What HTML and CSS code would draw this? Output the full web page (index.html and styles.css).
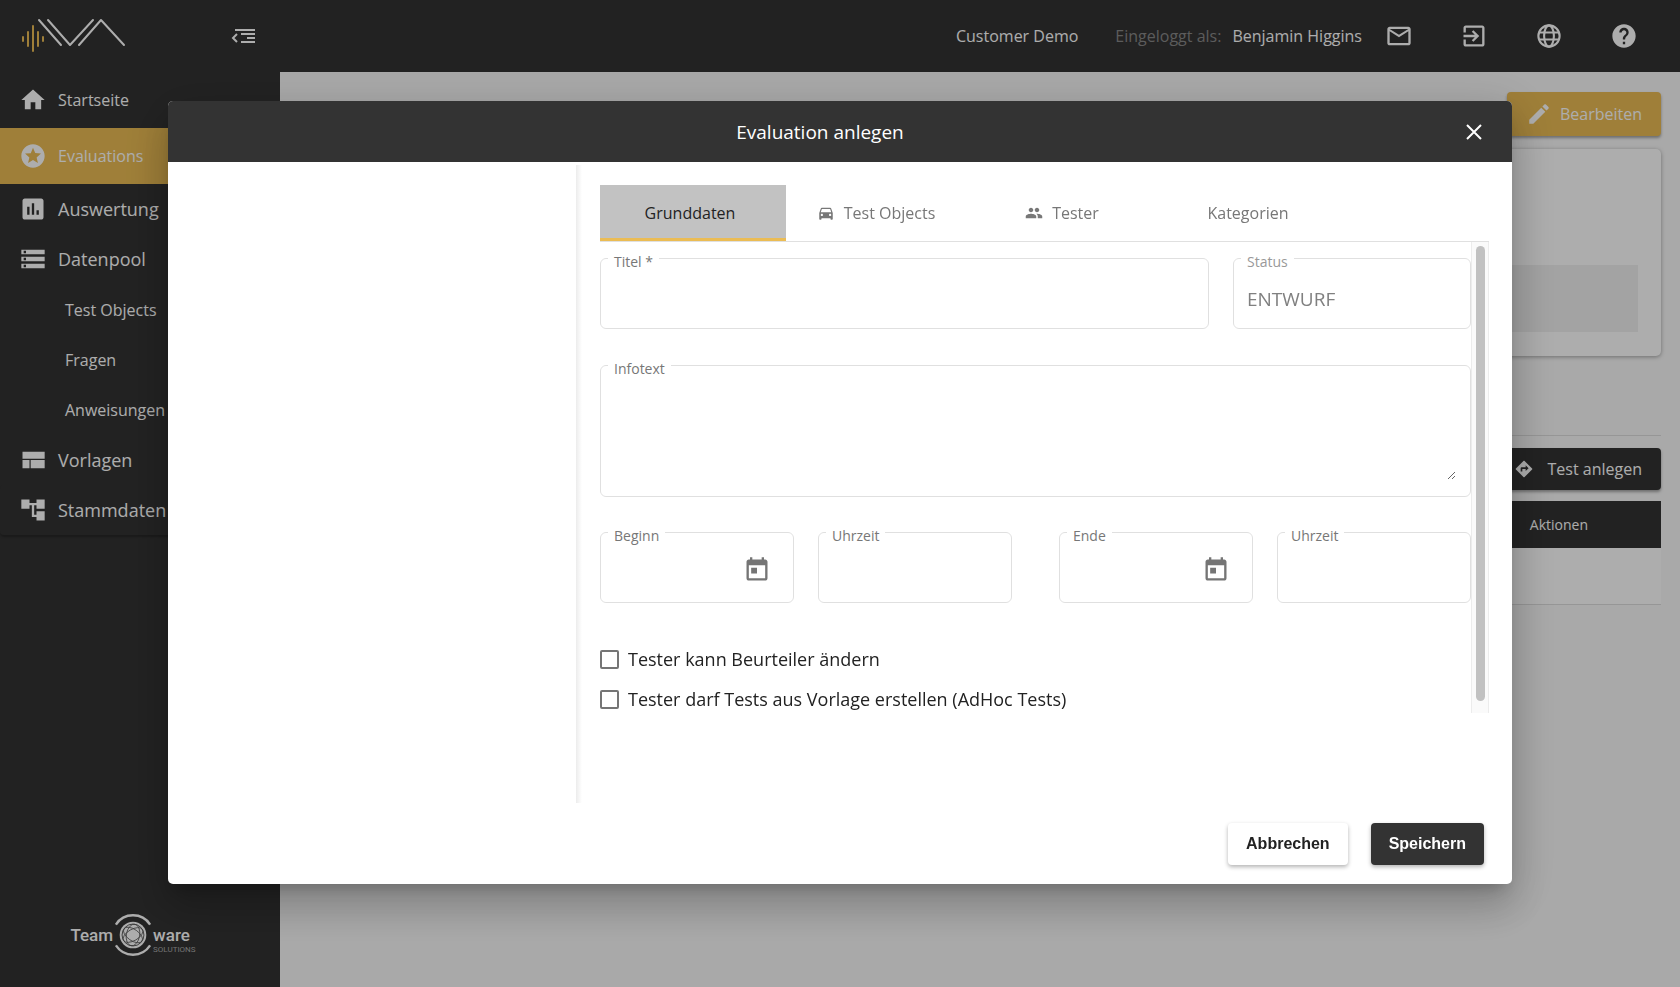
FILE: index.html
```html
<!DOCTYPE html>
<html lang="de">
<head>
<meta charset="utf-8">
<meta name="viewport" content="width=device-width, initial-scale=1">
<title>Evaluation anlegen</title>
<link rel="stylesheet" href="styles.css">
</head>
<body>
<svg class="sprite" aria-hidden="true">
  <symbol id="i-home" viewBox="0 0 24 24"><path d="M10 20v-6h4v6h5v-8h3L12 3 2 12h3v8z"/></symbol>
  <symbol id="i-stars" viewBox="0 0 24 24"><path d="M11.99 2C6.47 2 2 6.48 2 12s4.47 10 9.99 10C17.52 22 22 17.52 22 12S17.52 2 11.99 2zm4.24 16L12 15.45 7.77 18l1.12-4.81-3.73-3.23 4.92-.42L12 5l1.92 4.53 4.92.42-3.73 3.23L16.23 18z"/></symbol>
  <symbol id="i-chart" viewBox="0 0 24 24"><path d="M19 3H5c-1.1 0-2 .9-2 2v14c0 1.1.9 2 2 2h14c1.1 0 2-.9 2-2V5c0-1.1-.9-2-2-2zM9 17H7v-7h2v7zm4 0h-2V7h2v10zm4 0h-2v-4h2v4z"/></symbol>
  <symbol id="i-storage" viewBox="0 0 24 24"><path d="M2 20h20v-4H2v4zm2-3h2v2H4v-2zM2 4v4h20V4H2zm4 3H4V5h2v2zm-4 7h20v-4H2v4zm2-3h2v2H4v-2z"/></symbol>
  <symbol id="i-quilt" viewBox="0 0 24 24"><path d="M3 5h19v6H3zM3 12h6v7H3zM10 12h12v7H10z"/></symbol>
  <symbol id="i-tree" viewBox="0 0 24 24"><path d="M22 11V3h-7v3H9V3H2v8h7V8h2v10h4v3h7v-8h-7v3h-2V8h2v3z"/></symbol>
  <symbol id="i-mail" viewBox="0 0 24 24"><path d="M20 4H4c-1.1 0-1.99.9-1.99 2L2 18c0 1.1.9 2 2 2h16c1.1 0 2-.9 2-2V6c0-1.1-.9-2-2-2zm0 14H4V8l8 5 8-5v10zm-8-7L4 6h16l-8 5z"/></symbol>
  <symbol id="i-exit" viewBox="0 0 24 24"><path d="M10.09 15.59L11.5 17l5-5-5-5-1.41 1.41L12.67 11H3v2h9.67l-2.58 2.59zM19 3H5c-1.11 0-2 .9-2 2v4h2V5h14v14H5v-4H3v4c0 1.1.89 2 2 2h14c1.1 0 2-.9 2-2V5c0-1.1-.9-2-2-2z"/></symbol>
  <symbol id="i-globe" viewBox="0 0 24 24"><g fill="none" stroke="currentColor" stroke-width="1.8"><circle cx="12" cy="12" r="9.1"/><ellipse cx="12" cy="12" rx="4.2" ry="9.1"/><path d="M3.5 9h17M3.5 15h17"/></g></symbol>
  <symbol id="i-help" viewBox="0 0 24 24"><path d="M12 2C6.48 2 2 6.48 2 12s4.48 10 10 10 10-4.48 10-10S17.52 2 12 2zm1 17h-2v-2h2v2zm2.07-7.75l-.9.92C13.45 12.9 13 13.5 13 15h-2v-.5c0-1.1.45-2.1 1.17-2.83l1.24-1.26c.37-.36.59-.86.59-1.41 0-1.1-.9-2-2-2s-2 .9-2 2H8c0-2.21 1.79-4 4-4s4 1.79 4 4c0 .88-.36 1.68-.93 2.25z"/></symbol>
  <symbol id="i-edit" viewBox="0 0 24 24"><path d="M3 17.25V21h3.75L17.81 9.94l-3.75-3.75L3 17.25zM20.71 7.04c.39-.39.39-1.02 0-1.41l-2.34-2.34c-.39-.39-1.02-.39-1.41 0l-1.83 1.83 3.75 3.75 1.83-1.83z"/></symbol>
  <symbol id="i-directions" viewBox="0 0 24 24"><path d="M21.71 11.29l-9-9c-.39-.39-1.02-.39-1.41 0l-9 9c-.39.39-.39 1.02 0 1.41l9 9c.39.39 1.02.39 1.41 0l9-9c.39-.38.39-1.01 0-1.41zM14 14.5V12h-4v3H8v-4c0-.55.45-1 1-1h5V7.5l3.5 3.5-3.5 3.5z"/></symbol>
  <symbol id="i-today" viewBox="0 0 24 24"><path d="M19 3h-1V1h-2v2H8V1H6v2H5c-1.11 0-1.99.9-1.99 2L3 19c0 1.1.89 2 2 2h14c1.1 0 2-.9 2-2V5c0-1.1-.9-2-2-2zm0 16H5V8h14v11zM7 10h5v5H7z"/></symbol>
  <symbol id="i-people" viewBox="0 0 24 24"><path d="M16 11c1.66 0 2.99-1.34 2.99-3S17.66 5 16 5c-1.66 0-3 1.34-3 3s1.34 3 3 3zm-8 0c1.66 0 2.99-1.34 2.99-3S9.66 5 8 5C6.34 5 5 6.34 5 8s1.34 3 3 3zm0 2c-2.33 0-7 1.17-7 3.5V19h14v-2.5c0-2.33-4.67-3.5-7-3.5zm8 0c-.29 0-.62.02-.97.05 1.16.84 1.97 1.97 1.97 3.45V19h6v-2.5c0-2.33-4.67-3.5-7-3.5z"/></symbol>
  <symbol id="i-car" viewBox="0 0 24 24"><path d="M18.92 6.01C18.72 5.42 18.16 5 17.5 5h-11c-.66 0-1.21.42-1.42 1.01L3 12v8c0 .55.45 1 1 1h1c.55 0 1-.45 1-1v-1h12v1c0 .55.45 1 1 1h1c.55 0 1-.45 1-1v-8l-2.08-5.99zM6.5 16c-.83 0-1.5-.67-1.5-1.5S5.67 13 6.5 13s1.5.67 1.5 1.5S7.33 16 6.5 16zm11 0c-.83 0-1.5-.67-1.5-1.5s.67-1.5 1.5-1.5 1.5.67 1.5 1.5-.67 1.5-1.5 1.5zM5 11l1.5-4.5h11L19 11H5z"/></symbol>
</svg>

<div class="app">
  <aside class="sidebar">
    <div class="brand">
      <svg class="brand-logo" viewBox="0 0 108 36" fill="none" stroke-width="2" stroke-linecap="round" aria-hidden="true">
        <path class="gold" d="M3 19v4M8 14v14M13 8v25M18 14v14M23 19v4"/>
        <path class="white" d="M19 2l22 25M28 2l22 25L73 2M59 27L81 2l23 25" stroke-linejoin="round"/>
      </svg>
      <button class="icon-btn" type="button" aria-label="Menü einklappen">
        <svg class="collapse" viewBox="0 0 24 16" fill="none" stroke="currentColor" stroke-width="2" aria-hidden="true"><path d="M4 2h20M10 6h14M16 10h8M10 14h14M6 6L2 10l4 4"/></svg>
      </button>
    </div>
    <nav class="menu">
      <a class="item tall" href="#"><svg class="icon"><use href="#i-home"/></svg>Startseite</a>
      <a class="item tall active" href="#"><svg class="icon"><use href="#i-stars"/></svg>Evaluations</a>
      <a class="item group" href="#"><svg class="icon"><use href="#i-chart"/></svg>Auswertung</a>
      <a class="item group" href="#"><svg class="icon"><use href="#i-storage"/></svg>Datenpool</a>
      <a class="item sub" href="#">Test Objects</a>
      <a class="item sub" href="#">Fragen</a>
      <a class="item sub" href="#">Anweisungen</a>
      <a class="item group" href="#"><svg class="icon"><use href="#i-quilt"/></svg>Vorlagen</a>
      <a class="item group last" href="#"><svg class="icon"><use href="#i-tree"/></svg>Stammdaten</a>
    </nav>
    <div class="vendor">
      <span class="vendor-name">Team</span>
      <svg class="vendor-mark" viewBox="0 0 40 46" aria-hidden="true">
        <g fill="none" stroke="#fff" stroke-width="2.500"><path d="M2 12A21.500 21.500 0 0 1 38 12M2 34A21.500 21.500 0 0 0 38 34"/></g>
        <circle cx="20" cy="23" r="14" fill="#fff"/>
        <circle cx="20" cy="23" r="11.500" fill="none" stroke="#555" stroke-width="1"/>
        <g fill="none" stroke="#555" stroke-width=".8"><ellipse cx="20" cy="23" rx="11.500" ry="6" transform="rotate(35 20 23)"/><ellipse cx="20" cy="23" rx="11.500" ry="6" transform="rotate(-30 20 23)"/><ellipse cx="20" cy="23" rx="11.500" ry="7" transform="rotate(100 20 23)"/></g>
      </svg>
      <span class="vendor-right"><span class="vendor-name">ware</span><span class="vendor-sub">SOLUTIONS</span></span>
    </div>
  </aside>

  <div class="page">
    <header class="topbar">
      <span class="customer">Customer Demo</span>
      <span class="muted">Eingeloggt als:</span>
      <span class="user">Benjamin Higgins</span>
      <div class="actions">
        <button class="icon-btn" type="button" aria-label="Nachrichten"><svg class="icon"><use href="#i-mail"/></svg></button>
        <button class="icon-btn" type="button" aria-label="Abmelden"><svg class="icon"><use href="#i-exit"/></svg></button>
        <button class="icon-btn" type="button" aria-label="Sprache"><svg class="icon"><use href="#i-globe"/></svg></button>
        <button class="icon-btn" type="button" aria-label="Hilfe"><svg class="icon"><use href="#i-help"/></svg></button>
      </div>
    </header>
    <main class="content">
      <button class="btn edit" type="button"><svg class="icon small"><use href="#i-edit"/></svg>Bearbeiten</button>
      <section class="card"><div class="card-box"></div></section>
      <div class="rule"></div>
      <button class="btn create" type="button"><svg class="icon mini"><use href="#i-directions"/></svg>Test anlegen</button>
      <table class="list">
        <thead><tr><th scope="col">Aktionen</th></tr></thead>
        <tbody><tr><td></td></tr></tbody>
      </table>
    </main>
  </div>
</div>

<div class="backdrop">
  <div class="dialog" role="dialog" aria-modal="true" aria-labelledby="dlg-title">
    <div class="dialog-head">
      <h1 id="dlg-title">Evaluation anlegen</h1>
      <button class="icon-btn close" type="button" aria-label="Schließen"><svg viewBox="0 0 16 16" fill="none" stroke="currentColor" stroke-width="2" aria-hidden="true"><path d="M1 1l14 14M15 1L1 15"/></svg></button>
    </div>
    <div class="dialog-body">
      <div class="side"></div>
      <div class="pane">
        <div class="tabs" role="tablist">
          <button class="tab selected" type="button" role="tab" aria-selected="true">Grunddaten</button>
          <button class="tab" type="button" role="tab"><svg class="icon tiny"><use href="#i-car"/></svg>Test Objects</button>
          <button class="tab" type="button" role="tab"><svg class="icon tiny"><use href="#i-people"/></svg>Tester</button>
          <button class="tab" type="button" role="tab">Kategorien</button>
        </div>
        <div class="scroll">
          <form class="form">
            <div class="row title-row">
              <div class="field"><label for="titel">Titel *</label><input id="titel" type="text"></div>
              <div class="field disabled"><label for="status">Status</label><input id="status" type="text" value="ENTWURF" disabled></div>
            </div>
            <div class="field area"><label for="info">Infotext</label><textarea id="info"></textarea></div>
            <div class="row date-row">
              <div class="row pair">
                <div class="field"><label for="d1">Beginn</label><input id="d1" type="text"><button class="icon-btn" type="button" aria-label="Beginn wählen"><svg class="icon"><use href="#i-today"/></svg></button></div>
                <div class="field"><label for="t1">Uhrzeit</label><input id="t1" type="text"></div>
              </div>
              <div class="row pair">
                <div class="field"><label for="d2">Ende</label><input id="d2" type="text"><button class="icon-btn" type="button" aria-label="Ende wählen"><svg class="icon"><use href="#i-today"/></svg></button></div>
                <div class="field"><label for="t2">Uhrzeit</label><input id="t2" type="text"></div>
              </div>
            </div>
            <div class="checks">
              <label class="check"><input type="checkbox">Tester kann Beurteiler ändern</label>
              <label class="check"><input type="checkbox">Tester darf Tests aus Vorlage erstellen (AdHoc Tests)</label>
            </div>
          </form>
          <div class="track" aria-hidden="true"><div class="thumb"></div></div>
        </div>
      </div>
    </div>
    <div class="dialog-foot">
      <button class="btn plain" type="button">Abbrechen</button>
      <button class="btn dark" type="button">Speichern</button>
    </div>
  </div>
</div>
</body>
</html>
```
FILE: styles.css
```css
* { box-sizing: border-box; }
body {
  margin: 0;
  font-family: "Open Sans", "Noto Sans", sans-serif;
  font-size: 16px;
  font-weight: 500;
  color: #222;
  background: #f9f9f9;
}
button, input, textarea { font: inherit; color: inherit; }
button { border: 0; padding: 0; cursor: pointer; }
.sprite { position: absolute; width: 0; height: 0; }
.icon { width: 28px; height: 28px; fill: currentColor; flex: none; }
.icon.small { width: 26px; height: 26px; }
.icon.mini { width: 20px; height: 20px; }
.icon.tiny { width: 18px; height: 18px; }
.icon-btn { display: flex; align-items: center; justify-content: center; background: none; }

.app { display: flex; min-height: 100vh; }

.sidebar { width: 280px; flex: none; display: flex; flex-direction: column; background: #333; color: #fff; }
.brand { display: flex; align-items: center; justify-content: space-between; height: 72px; padding: 0 25px 1px 20px; }
.brand-logo { width: 108px; height: 36px; }
.brand-logo .gold { stroke: #ebbc54; }
.brand-logo .white { stroke: #fff; }
.collapse { width: 24px; height: 16px; }
.menu { display: flex; flex-direction: column; }
.item { display: flex; align-items: center; gap: 11px; height: 50px; padding: 0 19px; color: #fff; text-decoration: none; }
.item.tall { height: 56px; }
.item.active { background: #ebbc54; }
.item.group { font-size: 18px; }
.item.last { border-radius: 4px; box-shadow: 0 2px 2px rgba(0, 0, 0, .25); }
.item.sub { padding-left: 65px; }
.item.group + .item.sub { margin-top: 1px; }
.vendor { display: flex; align-items: center; justify-content: center; gap: 1px; margin: auto 14px 30px 0; }
.vendor-mark { width: 38px; height: 44px; }
.vendor-name { font: 500 17px/20px "Roboto", sans-serif; }
.vendor-right { display: flex; flex-direction: column; padding-top: 10px; }
.vendor-sub { font: 400 8px/10px "Roboto", sans-serif; color: #aaa; }

.page { flex: 1; min-width: 0; display: flex; flex-direction: column; }
.topbar { display: flex; align-items: center; justify-content: flex-end; height: 72px; padding-right: 42px; background: #333; color: #fff; }
.muted { color: #888; margin: 0 11px 0 37px; }
.actions { display: flex; gap: 47px; margin-left: 23px; }

.content { display: flex; flex-direction: column; align-items: flex-end; padding: 20px 19px 0 20px; }
.btn { display: flex; align-items: center; justify-content: center; border-radius: 4px; box-shadow: 0 2px 3px rgba(0, 0, 0, .35); }
.edit { gap: 8px; height: 44px; padding: 0 19px; background: #ebbc54; color: #fff; }
.card { align-self: stretch; margin-top: 13px; padding: 116px 23px 24px; background: #fff; border-radius: 5px; box-shadow: 0 1px 4px rgba(0, 0, 0, .35); }
.card-box { height: 67px; background: #f0f0f0; }
.rule { align-self: stretch; margin-top: 79px; border-top: 1px solid #ddd; }
.create { gap: 14px; height: 42px; margin-top: 12px; padding: 0 19px; background: #333; color: #fff; }
.list { width: 100%; margin-top: 11px; border-collapse: collapse; background: #fff; }
.list th { height: 47px; padding: 0 73px 0 0; text-align: right; font-size: 14px; font-weight: 500; color: #fff; background: #333; }
.list td { height: 56px; border-bottom: 1px solid #ddd; }

.backdrop { position: fixed; inset: 0; display: flex; align-items: center; justify-content: center; padding-bottom: 2px; background: rgba(0, 0, 0, .32); }
.dialog {
  width: 80%;
  overflow: hidden;
  background: #fff;
  border-radius: 5px;
  box-shadow: 0 11px 15px -7px rgba(0, 0, 0, .2), 0 24px 38px 3px rgba(0, 0, 0, .14), 0 9px 46px 8px rgba(0, 0, 0, .12);
}
.dialog-head { display: flex; align-items: center; height: 61px; padding-right: 30px; background: #333; color: #fff; }
.dialog-head h1 { flex: 1; margin: 0; padding-left: 6px; font-size: 19px; line-height: 24px; font-weight: 500; text-align: center; }
.close svg { width: 16px; height: 16px; }
.dialog-body { display: flex; min-height: 638px; margin-top: 3px; }
.side { width: 408px; flex: none; }
.pane { flex: 1; min-width: 0; padding: 20px 23px 0 24px; background: linear-gradient(to right, #ececec, #fff 6px); }
.tabs { display: flex; border-bottom: 1px solid #e0e0e0; }
.tab { display: flex; align-items: center; justify-content: center; gap: 9px; width: 186px; height: 56px; padding-right: 6px; background: none; color: #777; }
.tab.selected { background: #c2c2c2; color: #222; box-shadow: inset 0 -3px #ebbc54; }
.scroll { display: flex; }
.form { flex: 1; min-width: 0; padding-top: 16px; }
.row { display: flex; gap: 24px; }
.field { position: relative; display: flex; align-items: center; flex: 1; min-width: 0; height: 71px; border: 1px solid #e0e0e0; border-radius: 6px; }
.field > label { position: absolute; top: -7px; left: 7px; padding: 0 6px; font-size: 14px; line-height: 20px; color: #777; background: #fff; }
.field.disabled > label { color: #999; }
.field input { width: 100%; min-width: 0; height: 48px; margin-top: 10px; padding: 0 13px; border: 0; outline: 0; background: none; font-size: 19px; }
.field input:disabled { color: #808080; }
.field .icon-btn { margin: 4px 22px 0 0; color: #757575; }
.title-row .field:last-child { flex: none; width: 238px; }
.area { height: 132px; margin: 36px 0 35px; }
.area textarea { align-self: stretch; width: 100%; margin: 16px 14px 16px 13px; padding: 0; border: 0; outline: 0; resize: vertical; background: none; }
.date-row { gap: 47px; margin-bottom: 42px; }
.pair { flex: 1; }
.checks { display: flex; flex-direction: column; gap: 12px; }
.check { display: flex; align-items: center; gap: 9px; height: 28px; font-size: 18px; }
.check input { appearance: none; width: 19px; height: 19px; margin: 0; border: 2px solid #757575; border-radius: 2px; }
.track { width: 18px; flex: none; padding: 4px 3px 12px 4px; background: #fafafa; border: solid #ececec; border-width: 0 1px; }
.thumb { height: 100%; width: 9px; border-radius: 5px; background: #c1c1c1; }
.dialog-foot { display: flex; justify-content: flex-end; gap: 23px; padding: 20px 28px 19px; }
.dialog-foot .btn { height: 42px; padding: 0 18px; font: 700 16px "Liberation Sans", Arial, sans-serif; box-shadow: 0 2px 4px rgba(0, 0, 0, .3); }
.plain { background: #fff; color: #222; }
.dark { background: #333; color: #fff; }
```
